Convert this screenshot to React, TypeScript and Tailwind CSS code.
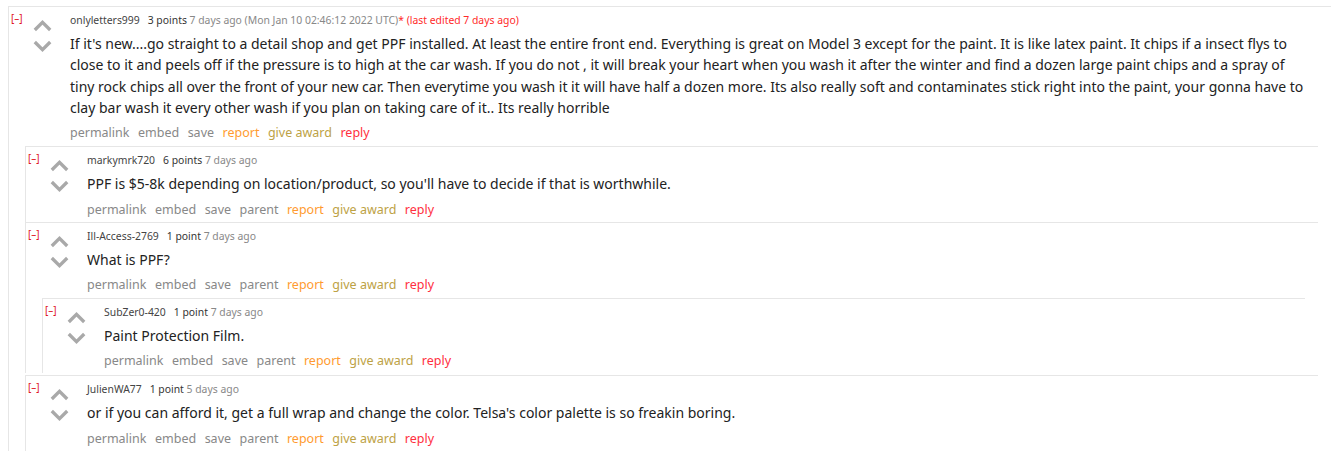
import React from "react"

type C = {
  user: string
  points: string
  age: string
  extra?: React.ReactNode
  body: string
  parent?: boolean
  kids?: C[]
}

const data: C = {
  user: "onlyletters999",
  points: "3 points",
  age: "7 days ago",
  extra: (
    <>
      <span className="text-[#888]"> (Mon Jan 10 02:46:12 2022 UTC)</span>
      <span className="text-[#ff2a2a]">* (last edited 7 days ago)</span>
    </>
  ),
  body:
    "If it's new....go straight to a detail shop and get PPF installed. At least the entire front end. Everything is great on Model 3 except for the paint. It is like latex paint. It chips if a insect flys to close to it and peels off if the pressure is to high at the car wash. If you do not , it will break your heart when you wash it after the winter and find a dozen large paint chips and a spray of tiny rock chips all over the front of your new car. Then everytime you wash it it will have half a dozen more. Its also really soft and contaminates stick right into the paint, your gonna have to clay bar wash it every other wash if you plan on taking care of it.. Its really horrible",
  kids: [
    {
      user: "markymrk720",
      points: "6 points",
      age: "7 days ago",
      body: "PPF is $5-8k depending on location/product, so you'll have to decide if that is worthwhile.",
      parent: true,
    },
    {
      user: "Ill-Access-2769",
      points: "1 point",
      age: "7 days ago",
      body: "What is PPF?",
      parent: true,
      kids: [
        {
          user: "SubZer0-420",
          points: "1 point",
          age: "7 days ago",
          body: "Paint Protection Film.",
          parent: true,
        },
      ],
    },
    {
      user: "JulienWA77",
      points: "1 point",
      age: "5 days ago",
      body: "or if you can afford it, get a full wrap and change the color. Telsa's color palette is so freakin boring.",
      parent: true,
    },
  ],
}

function Arrow({ down }: { down?: boolean }) {
  return (
    <svg width="19" height="13" viewBox="0 0 19 13" className="block">
      <polyline
        points={down ? "1.8,2 9.5,9.7 17.2,2" : "1.8,11 9.5,3.3 17.2,11"}
        fill="none"
        stroke="#a9a9a9"
        strokeWidth="3.3"
      />
    </svg>
  )
}

function Comment({ c, top }: { c: C; top?: boolean }) {
  return (
    <div
      className={
        "border-l border-t border-[#e6e6e6] " +
        (c.kids ? "" : "pb-[3px] ") +
        (top ? "ml-[8px] mr-[4px] mt-[5px]" : "ml-[16px] mr-[13px]")
      }
    >
      <div className="flex pt-[6px]">
        <div className="w-[24px] shrink-0 pl-[2px] -mt-[1px] text-[10px] leading-[12px] text-[#e0141e]">[–]</div>
        <div className="w-[37px] shrink-0 pt-[6px]">
          <Arrow />
          <div className="h-[8px]" />
          <Arrow down />
        </div>
        <div className="flex-1 min-w-0">
          <div className="text-[10.4px] leading-[14px]">
            <span className="text-[#444]">{c.user}</span>
            <span className="text-[#333] ml-[8px]">{c.points}</span>
            <span className="text-[#888]"> {c.age}</span>
            {c.extra}
          </div>
          <p className="mt-[6px] text-[14px] leading-[21.33px] text-[#222] pr-[20px]">{c.body}</p>
          <div className="mt-[6px] flex gap-[8.5px] text-[12.5px] leading-[18px]">
            <span className="text-[#888]">permalink</span>
            <span className="text-[#888]">embed</span>
            <span className="text-[#888]">save</span>
            {c.parent && <span className="text-[#888]">parent</span>}
            <span className="text-[#ff9b30]">report</span>
            <span className="text-[#bda245]">give award</span>
            <span className="text-[#ff3040]">reply</span>
          </div>
        </div>
      </div>
      {c.kids && (
        <div className="mt-[4px] mb-[2px]">
          {c.kids.map((k) => (
            <Comment key={k.user} c={k} />
          ))}
        </div>
      )}
    </div>
  )
}

export default function App() {
  return (
    <div className="bg-white h-[456px] overflow-hidden font-['Noto_Sans',sans-serif]">
      <div className="pt-px">
        <Comment c={data} top />
      </div>
    </div>
  )
}
